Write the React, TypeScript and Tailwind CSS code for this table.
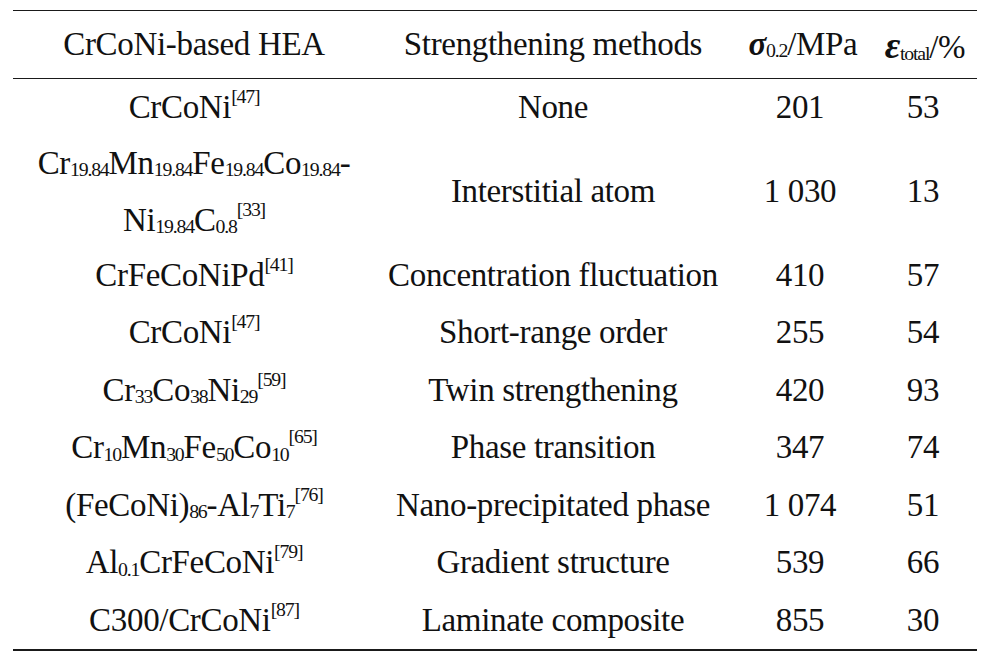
import type { ReactNode } from 'react'

const Sub = ({ children }: { children: ReactNode }) => (
  <sub className="text-[0.6em] tracking-[-0.06em] relative top-[0.12em] align-baseline">{children}</sub>
)

const Sup = ({ children }: { children: ReactNode }) => (
  <sup className="text-[0.6em] tracking-[-0.06em] relative -top-[0.75em] align-baseline">{children}</sup>
)

type Row = { alloy: ReactNode; method: string; sigma: string; eps: string; tall?: boolean }

const rows: Row[] = [
  { alloy: <>CrCoNi<Sup>[47]</Sup></>, method: 'None', sigma: '201', eps: '53' },
  {
    alloy: (
      <div className="flex flex-col items-center gap-[24px] leading-none">
        <span>
          Cr<Sub>19.84</Sub>Mn<Sub>19.84</Sub>Fe<Sub>19.84</Sub>Co<Sub>19.84</Sub>-
        </span>
        <span>
          Ni<Sub>19.84</Sub>C<Sub>0.8</Sub>
          <Sup>[33]</Sup>
        </span>
      </div>
    ),
    method: 'Interstitial atom',
    sigma: '1 030',
    eps: '13',
    tall: true,
  },
  { alloy: <>CrFeCoNiPd<Sup>[41]</Sup></>, method: 'Concentration fluctuation', sigma: '410', eps: '57' },
  { alloy: <>CrCoNi<Sup>[47]</Sup></>, method: 'Short-range order', sigma: '255', eps: '54' },
  {
    alloy: <>Cr<Sub>33</Sub>Co<Sub>38</Sub>Ni<Sub>29</Sub><Sup>[59]</Sup></>,
    method: 'Twin strengthening',
    sigma: '420',
    eps: '93',
  },
  {
    alloy: <>Cr<Sub>10</Sub>Mn<Sub>30</Sub>Fe<Sub>50</Sub>Co<Sub>10</Sub><Sup>[65]</Sup></>,
    method: 'Phase transition',
    sigma: '347',
    eps: '74',
  },
  {
    alloy: <>(FeCoNi)<Sub>86</Sub>-Al<Sub>7</Sub>Ti<Sub>7</Sub><Sup>[76]</Sup></>,
    method: 'Nano-precipitated phase',
    sigma: '1 074',
    eps: '51',
  },
  { alloy: <>Al<Sub>0.1</Sub>CrFeCoNi<Sup>[79]</Sup></>, method: 'Gradient structure', sigma: '539', eps: '66' },
  { alloy: <>C300/CrCoNi<Sup>[87]</Sup></>, method: 'Laminate composite', sigma: '855', eps: '30' },
]

const cols = 'grid grid-cols-[362px_356px_138px_108px] items-center text-center'

export default function App() {
  return (
    <div
      className="w-[991px] h-[655px] bg-white text-[#111] text-[33px] tracking-[-0.01em] pt-[10px]"
      style={{ fontFamily: '"Liberation Serif", "Times New Roman", serif' }}
    >
      <div className="mx-[13px] w-[964px]">
        {/* Header */}
        <div className={`${cols} h-[69px] border-t-[1.5px] border-b-[1.5px] border-[#1a1a1a] leading-none`}>
          <div>CrCoNi-based HEA</div>
          <div>Strengthening methods</div>
          <div className="pl-[6px]">
            <span className="italic font-bold">σ</span>
            <Sub>0.2</Sub>/MPa
          </div>
          <div className="pl-[4px]">
            <span className="italic font-bold text-[38px]">ε</span>
            <Sub>total</Sub>/%
          </div>
        </div>

        {/* Body */}
        <div className="border-b-2 border-[#1a1a1a]">
          {rows.map((r, i) => (
            <div key={i} className={`${cols} ${r.tall ? 'h-[110px]' : 'h-[57.5px]'} leading-none`}>
              <div>{r.alloy}</div>
              <div>{r.method}</div>
              <div>{r.sigma}</div>
              <div>{r.eps}</div>
            </div>
          ))}
        </div>
      </div>
    </div>
  )
}
